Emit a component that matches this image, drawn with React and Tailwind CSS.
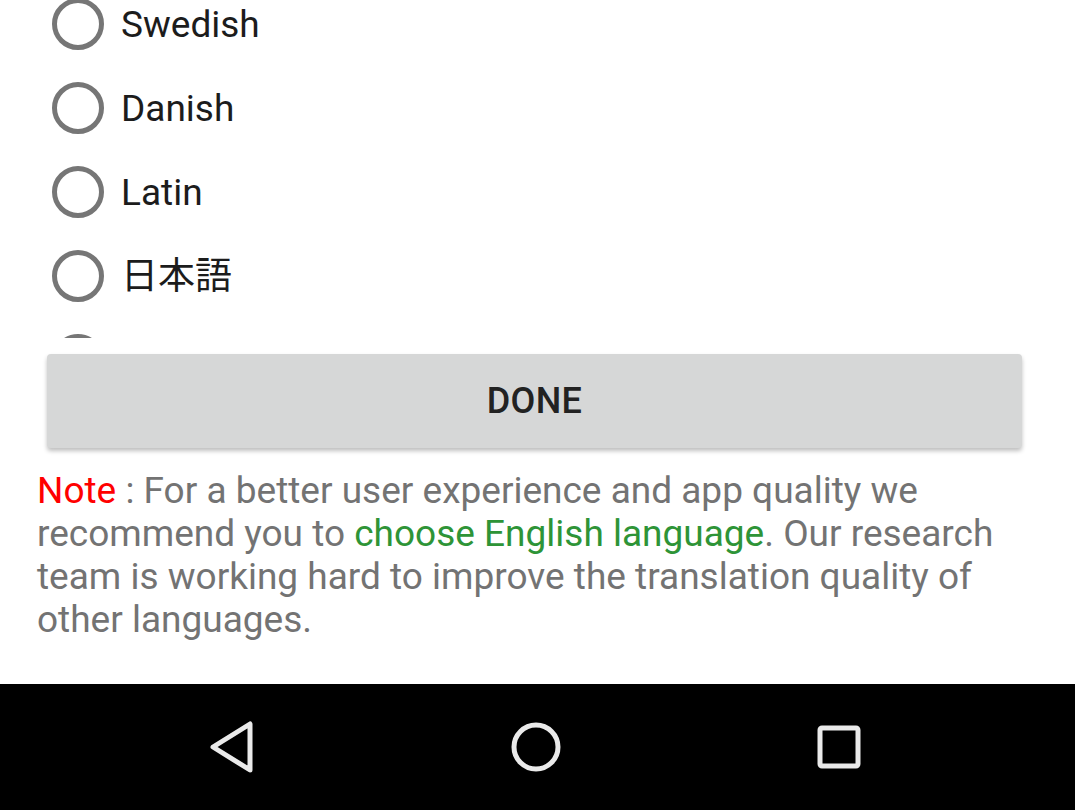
import React from "react";

const langs = ["Swedish", "Danish", "Latin", "日本語", ""];

function Radio() {
  return (
    <span className="box-border block h-[52px] w-[52px] shrink-0 rounded-full border-[5px] border-[#767676]" />
  );
}

export default function App() {
  return (
    <div
      className="flex h-[810px] w-[1075px] flex-col overflow-hidden bg-white"
      style={{ fontFamily: 'Roboto, "Noto Sans CJK JP", sans-serif' }}
    >
      <div className="h-[338px] shrink-0 overflow-hidden">
        <div className="-mt-[18px] flex flex-col">
          {langs.map((l, i) => (
            <div key={i} className="flex h-[84px] items-center gap-[17px] pl-[52px]">
              <Radio />
              <span className="text-[37px] leading-none text-[#1c1c1c]">{l}</span>
            </div>
          ))}
        </div>
      </div>
      <div className="pl-[47px] pr-[53px] pt-[16px]">
        <button className="flex h-[94px] w-full items-center justify-center rounded-[4px] bg-[#d6d7d7] text-[36px] font-medium tracking-[0.3px] text-[#222] shadow-[0_3px_4px_rgba(0,0,0,0.25)]">
          DONE
        </button>
      </div>
      <p className="pl-[37px] pr-[30px] pt-[21px] text-[37px] leading-[43px] text-[#737373]">
        <span className="text-[#f00]">Note</span> : For a better user experience and app quality we
        recommend you to <span className="text-[#2e9437]">choose English language</span>. Our research
        team is working hard to improve the translation quality of other languages.
      </p>
      <div className="mt-auto flex h-[126px] shrink-0 items-center bg-black">
        <div className="flex w-full items-center justify-between pl-[208px] pr-[213px]">
          <svg width="48" height="54" viewBox="0 0 48 54">
            <path d="M42 4 L42 50 L5 27 Z" fill="none" stroke="#eaeaea" strokeWidth="5" strokeLinejoin="round" />
          </svg>
          <svg width="54" height="54" viewBox="0 0 54 54">
            <circle cx="27" cy="27" r="22" fill="none" stroke="#eaeaea" strokeWidth="5" />
          </svg>
          <svg width="46" height="46" viewBox="0 0 46 46">
            <rect x="4" y="4" width="38" height="38" rx="2" fill="none" stroke="#eaeaea" strokeWidth="5" />
          </svg>
        </div>
      </div>
    </div>
  );
}
